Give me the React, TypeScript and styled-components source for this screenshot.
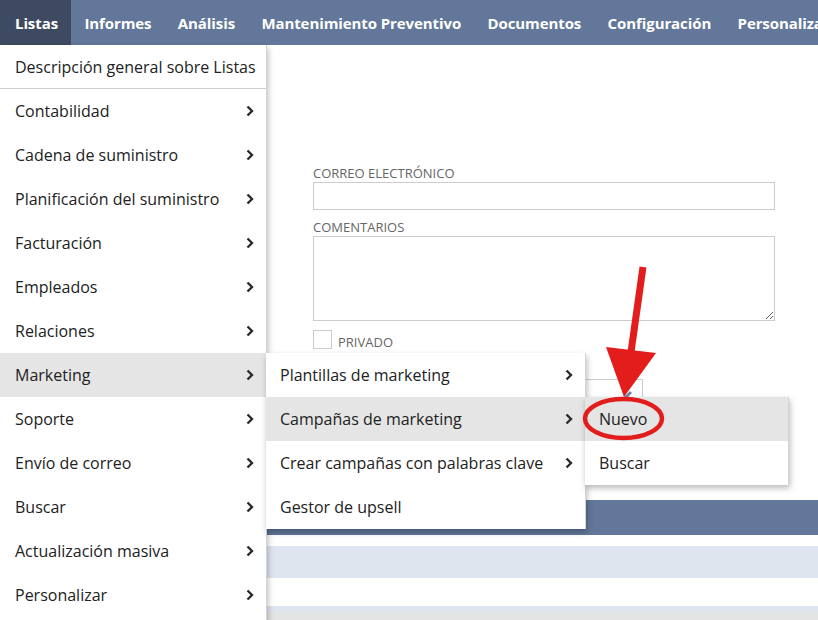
import React from "react";
import styled, { createGlobalStyle } from "styled-components";

const Global = createGlobalStyle`
  html, body { margin: 0; padding: 0; background: #fff; }
  body { font-family: "Open Sans", "Noto Sans", sans-serif; overflow: hidden; }
  * { box-sizing: border-box; }
`;

const Page = styled.div`
  position: relative;
  width: 818px;
  height: 620px;
  overflow: hidden;
  background: #fff;
`;

const NavBar = styled.nav`
  display: flex;
  height: 45px;
  background: #627799;
  white-space: nowrap;
`;

const NavItem = styled.div<{ $active?: boolean }>`
  position: relative;
  display: flex;
  align-items: center;
  padding: 0 13.2px;
  height: 45px;
  font-size: 15px;
  font-weight: 700;
  letter-spacing: -0.09px;
  color: #fff;
  background: ${(p) => (p.$active ? "#3d4a62" : "transparent")};
  &:first-child {
    padding-left: 15px;
  }
`;

const Content = styled.main`
  display: flex;
  flex-direction: column;
`;

const Form = styled.section`
  display: flex;
  flex-direction: column;
  padding: 120px 43px 0 313px;
  height: 455px;
`;

const Label = styled.label`
  display: block;
  font-size: 13px;
  line-height: 17px;
  color: #666;
  text-transform: uppercase;
  margin-bottom: 0;
`;

const TextInput = styled.div`
  height: 28px;
  border: 1px solid #ccc;
  margin-bottom: 9px;
`;

const TextArea = styled.textarea`
  display: block;
  width: 100%;
  height: 85px;
  border: 1px solid #ccc;
  resize: both;
  margin: 0 0 8px 0;
  padding: 0;
  outline: none;
  font-family: inherit;
`;

const CheckRow = styled.div`
  display: flex;
  align-items: flex-end;
  gap: 6px;
  height: 20px;
`;

const CheckBox = styled.span`
  width: 19px;
  height: 19px;
  border: 1px solid #ccc;
  background: #fff;
`;

const CheckLabel = styled.span`
  font-size: 13px;
  line-height: 14px;
  color: #666;
`;

const SelectField = styled.div`
  position: relative;
  margin-top: 30px;
  width: 330px;
  height: 24px;
  border: 1px solid #ccc;
  border-bottom: none;
`;

const Pencil = styled.svg`
  position: absolute;
  right: 8px;
  top: 9px;
`;

const Band = styled.div<{ $color: string; $h: number; $mt?: number }>`
  height: ${(p) => p.$h}px;
  margin-top: ${(p) => p.$mt ?? 0}px;
  background: ${(p) => p.$color};
`;

const Menu = styled.ul<{ $top: number; $left: number; $width: number; $tail?: number }>`
  position: absolute;
  top: ${(p) => p.$top}px;
  left: ${(p) => p.$left}px;
  width: ${(p) => p.$width}px;
  margin: 0;
  padding: 0 0 ${(p) => p.$tail ?? 0}px 0;
  list-style: none;
  background: #fff;
  border-right: 1px solid #d4d4d4;
  box-shadow: 1px 3px 6px rgba(0, 0, 0, 0.28);
  z-index: 2;
`;

const MenuItem = styled.li<{ $hl?: boolean; $divider?: boolean; $pl: number; $pr: number }>`
  position: relative;
  display: flex;
  align-items: center;
  justify-content: space-between;
  height: 44px;
  padding: 0 ${(p) => p.$pr}px 0 ${(p) => p.$pl}px;
  font-size: 16px;
  color: #222;
  white-space: nowrap;
  background: ${(p) => (p.$hl ? "#e5e5e5" : "#fff")};
  border-bottom: ${(p) => (p.$divider ? "1px solid #cfcfcf" : "none")};
`;

const Chevron = () => (
  <svg width="8" height="12" viewBox="0 0 8 12">
    <polyline points="1.5,1.5 6,6 1.5,10.5" fill="none" stroke="#2b2b2b" strokeWidth="2.4" />
  </svg>
);

const Annotation = styled.svg`
  position: absolute;
  left: 0;
  top: 0;
  pointer-events: none;
  z-index: 5;
`;

const navItems = [
  "Listas",
  "Informes",
  "Análisis",
  "Mantenimiento Preventivo",
  "Documentos",
  "Configuración",
  "Personalizar",
];

const mainItems = [
  "Contabilidad",
  "Cadena de suministro",
  "Planificación del suministro",
  "Facturación",
  "Empleados",
  "Relaciones",
  "Marketing",
  "Soporte",
  "Envío de correo",
  "Buscar",
  "Actualización masiva",
  "Personalizar",
];

const sub1 = [
  { t: "Plantillas de marketing", c: true },
  { t: "Campañas de marketing", c: true, hl: true },
  { t: "Crear campañas con palabras clave", c: true },
  { t: "Gestor de upsell", c: false },
];

export default function App() {
  return (
    <Page>
      <Global />
      <NavBar>
        {navItems.map((n, i) => (
          <NavItem key={n} $active={i === 0}>
            {n}
          </NavItem>
        ))}
      </NavBar>
      <Content>
        <Form>
          <Label>Correo electrónico</Label>
          <TextInput />
          <Label>Comentarios</Label>
          <TextArea />
          <CheckRow>
            <CheckBox />
            <CheckLabel>PRIVADO</CheckLabel>
          </CheckRow>
          <SelectField>
            <Pencil width="12" height="12" viewBox="0 0 12 12">
              <path d="M1 11 L2 8 L8 2 L10 4 L4 10 Z" fill="#6a86b0" />
            </Pencil>
          </SelectField>
        </Form>
        <Band $color="#627799" $h={35} />
        <Band $color="#dfe5ef" $h={32} $mt={11} />
        <Band $color="#dfe5ef" $h={6} $mt={28} />
        <Band $color="#e4e4e4" $h={10} />
      </Content>

      <Menu $top={45} $left={0} $width={267} $tail={20}>
        <MenuItem $divider $pl={15} $pr={12}>
          Descripción general sobre Listas
        </MenuItem>
        {mainItems.map((m) => (
          <MenuItem key={m} $hl={m === "Marketing"} $pl={15} $pr={12}>
            {m}
            <Chevron />
          </MenuItem>
        ))}
      </Menu>

      <Menu $top={353} $left={266} $width={320}>
        {sub1.map((s) => (
          <MenuItem key={s.t} $hl={s.hl} $pl={14} $pr={12}>
            {s.t}
            {s.c && <Chevron />}
          </MenuItem>
        ))}
      </Menu>

      <Menu $top={397} $left={585} $width={204}>
        <MenuItem $hl $pl={14} $pr={12}>
          Nuevo
        </MenuItem>
        <MenuItem $pl={14} $pr={12}>
          Buscar
        </MenuItem>
      </Menu>

      <Annotation width="818" height="620" viewBox="0 0 818 620">
        <line x1="643" y1="267" x2="631" y2="352" stroke="#e31c1c" strokeWidth="7" />
        <polygon points="606,347 656,353 624,397" fill="#e31c1c" />
        <ellipse cx="623.5" cy="418.5" rx="38.5" ry="19.5" fill="none" stroke="#e31c1c" strokeWidth="4.5" />
      </Annotation>
    </Page>
  );
}
